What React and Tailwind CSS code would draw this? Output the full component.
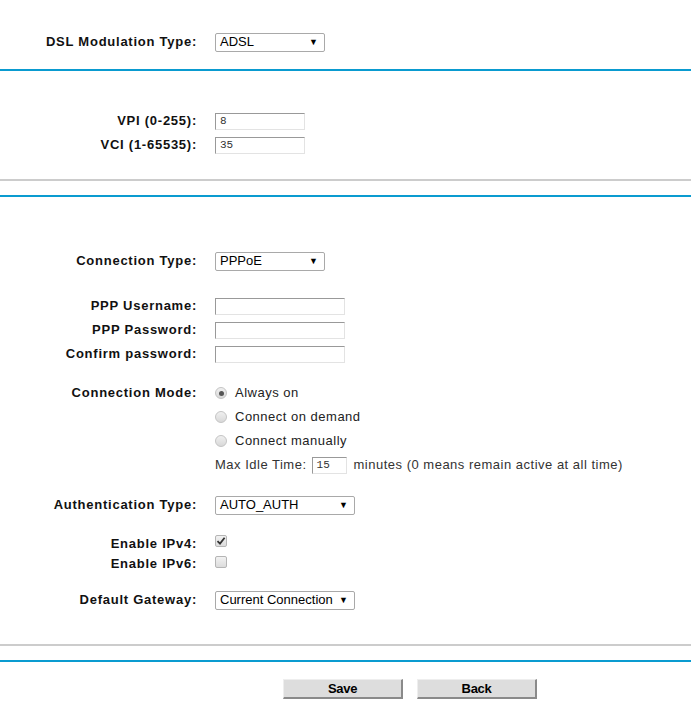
import React from "react";

const sans = { fontFamily: '"Liberation Sans", Arial, sans-serif' };

// form row: right aligned bold label, control column starting at x=215
const Row = ({ label, h = "h-[24px]", children }) => (
  <div className={`grid grid-cols-[197px_1fr] gap-x-[18px] items-center ${h}`}>
    <div className="text-right text-[13px] font-bold text-[#111] tracking-[0.75px] whitespace-nowrap">
      {label}
    </div>
    <div className="flex items-center">{children}</div>
  </div>
);

const Select = ({ value, w }) => (
  <div
    className={`${w} h-[19px] border border-[#a9a9a9] rounded-[2px] bg-white flex items-center justify-between pl-[4px] pr-[6px] text-[13px] text-black`}
  >
    <span>{value}</span>
    <span className="text-[9px] leading-none">▼</span>
  </div>
);

const TextBox = ({ value = "", w = "w-[90px]" }) => (
  <div
    className={`${w} h-[17px] bg-white border-t border-l border-t-[#999] border-l-[#999] border-b border-r border-b-[#e3e3e3] border-r-[#e3e3e3] flex items-center pl-[4px] text-[11px] text-[#333]`}
    style={{ fontFamily: '"Liberation Mono", "DejaVu Sans Mono", monospace' }}
  >
    {value}
  </div>
);

const Radio = ({ checked }) => (
  <span className="w-[12px] h-[12px] rounded-full border border-[#c4c4c4] bg-gradient-to-b from-[#f0f0f0] to-[#d8d8d8] flex items-center justify-center shrink-0">
    {checked && <span className="w-[5px] h-[5px] rounded-full bg-[#555]" />}
  </span>
);

const Checkbox = ({ checked }) => (
  <span className="w-[12px] h-[12px] rounded-[2px] border border-[#b5b5b5] bg-gradient-to-b from-[#f2f2f2] to-[#dcdcdc] flex items-center justify-center">
    {checked && (
      <svg width="10" height="10" viewBox="0 0 10 10">
        <path d="M1.5 5.2 L4 7.6 L8.6 1.8" stroke="#333" strokeWidth="1.8" fill="none" />
      </svg>
    )}
  </span>
);

const Divider = () => (
  <div>
    <div className="h-[2px] bg-[#cccccc]" />
    <div className="h-[14px]" />
    <div className="h-[2px] bg-[#0a9bd0]" />
  </div>
);

const Button = ({ children }) => (
  <button className="w-[120px] h-[20px] bg-[#dddddd] border-t border-l border-t-[#eeeeee] border-l-[#eeeeee] border-b-2 border-r-2 border-b-[#8a8a8a] border-r-[#8a8a8a] text-[13px] font-bold text-black leading-none tracking-[-0.3px]">
    {children}
  </button>
);

export default function App() {
  return (
    <div className="w-[691px] h-[724px] bg-white overflow-hidden" style={sans}>
      {/* DSL modulation */}
      <div className="pt-[32px] pb-[17px]">
        <Row label="DSL Modulation Type:" h="h-[20px]">
          <Select value="ADSL" w="w-[110px]" />
        </Row>
      </div>
      <div className="h-[2px] bg-[#0a9bd0]" />

      {/* VPI / VCI */}
      <div className="pt-[38px] pb-[22px]">
        <Row label="VPI (0-255):">
          <TextBox value="8" />
        </Row>
        <Row label="VCI (1-65535):">
          <TextBox value="35" />
        </Row>
      </div>
      <Divider />

      {/* Connection settings */}
      <div className="pt-[52px] pb-[32px]">
        <Row label="Connection Type:">
          <Select value="PPPoE" w="w-[110px]" />
        </Row>

        <div className="mt-[21px]">
          <Row label="PPP Username:">
            <TextBox w="w-[130px]" />
          </Row>
          <Row label="PPP Password:">
            <TextBox w="w-[130px]" />
          </Row>
          <Row label="Confirm password:">
            <TextBox w="w-[130px]" />
          </Row>
        </div>

        <div className="mt-[15px] text-[13px] text-[#222] tracking-[0.5px]">
          <Row label="Connection Mode:">
            <label className="flex items-center gap-[8px]">
              <Radio checked />
              Always on
            </label>
          </Row>
          <Row label="">
            <label className="flex items-center gap-[8px]">
              <Radio />
              Connect on demand
            </label>
          </Row>
          <Row label="">
            <label className="flex items-center gap-[8px]">
              <Radio />
              Connect manually
            </label>
          </Row>
          <Row label="">
            <span className="text-[#333]">Max Idle Time:</span>
            <span className="ml-[5px] tracking-normal">
              <TextBox value="15" w="w-[35px]" />
            </span>
            <span className="ml-[7px] text-[#333]">minutes (0 means remain active at all time)</span>
          </Row>
        </div>

        <div className="mt-[16px]">
          <Row label="Authentication Type:">
            <Select value="AUTO_AUTH" w="w-[140px]" />
          </Row>
        </div>

        <div className="mt-[17px]">
          <Row label="Enable IPv4:" h="h-[20px]">
            <span className="-mt-[6px]">
              <Checkbox checked />
            </span>
          </Row>
          <Row label="Enable IPv6:" h="h-[20px]">
            <span className="-mt-[4px]">
              <Checkbox />
            </span>
          </Row>
        </div>

        <div className="mt-[14px]">
          <Row label="Default Gateway:">
            <Select value="Current Connection" w="w-[140px]" />
          </Row>
        </div>
      </div>
      <Divider />

      {/* Actions */}
      <div className="pt-[17px] pl-[283px] flex gap-[14px]">
        <Button>Save</Button>
        <Button>Back</Button>
      </div>
    </div>
  );
}
